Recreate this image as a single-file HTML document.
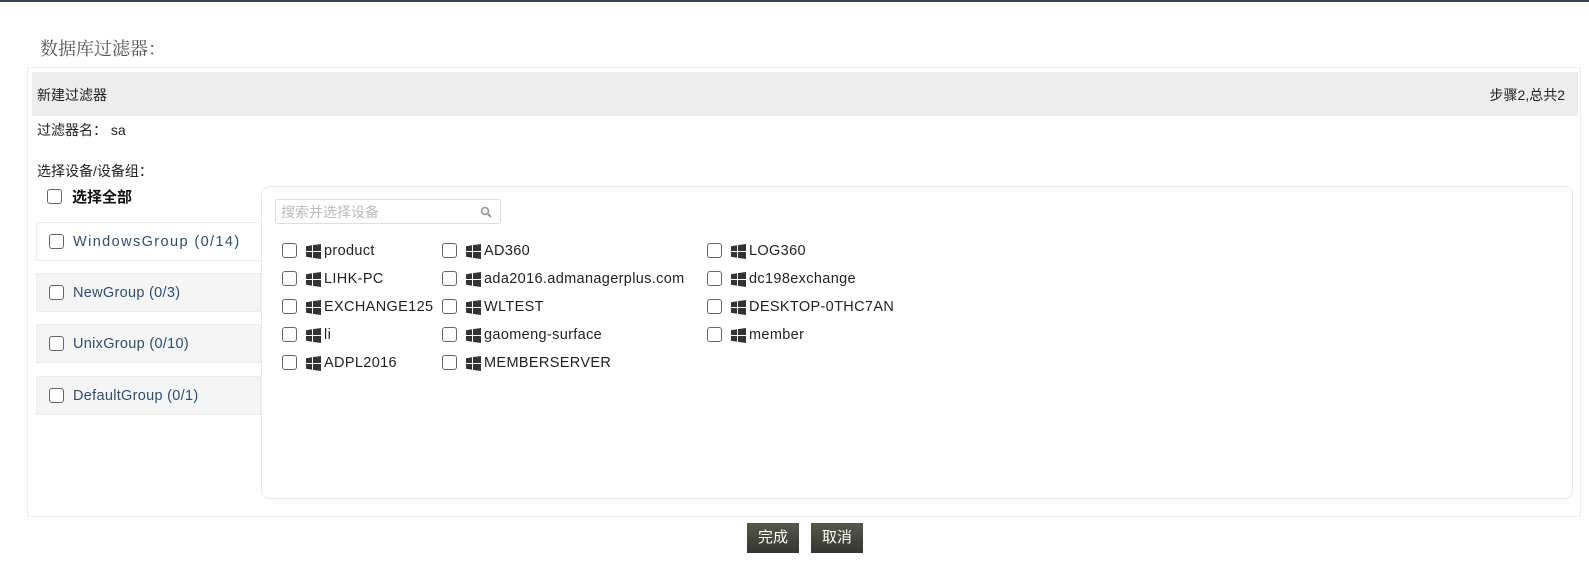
<!DOCTYPE html>
<html><head><meta charset="utf-8"><style>
*{margin:0;padding:0;box-sizing:border-box}
body{width:1589px;height:565px;background:#fff;position:relative;overflow:hidden;font-family:"Liberation Sans","Noto Sans CJK SC",sans-serif;font-size:14px;color:#222}
.a{position:absolute}
.cb{position:absolute;width:15px;height:15px;border:1px solid #666;border-radius:3px;background:#fff}
.grp{position:absolute;left:36px;width:225px;height:39px;background:#f5f5f5;border:1px solid #ececec}
.grp span{position:absolute;left:36px;top:11px;color:#2f4d6f;font-size:14.5px;letter-spacing:.3px}
.grp .cb{left:12px;top:11px}
.it{position:absolute;height:18px;font-size:14.5px;color:#222;white-space:nowrap;letter-spacing:.35px}
.it .cb{left:0;top:1px}
.it svg{position:absolute;left:24px;top:2px}
.it span{position:absolute;left:42px;top:1px}
.btn{position:absolute;top:523px;width:52px;height:30px;background:linear-gradient(#55584c,#34362e);color:#fff;font-size:15px;text-align:center;line-height:30px}
</style></head><body>
<div class="a" style="left:0;top:0;width:1589px;height:2px;background:#3d4650"></div>
<div class="a" style="left:40px;top:35px;font-family:'Liberation Serif','Noto Serif CJK SC',serif;font-size:18px;color:#555">数据库过滤器：</div>
<div class="a" style="left:27px;top:67px;width:1554px;height:450px;border:1px solid #eee"></div>
<div class="a" style="left:32px;top:72px;width:1546px;height:44px;background:#ededee"></div>
<div class="a" style="left:37px;top:85px">新建过滤器</div>
<div class="a" style="right:24px;top:85px">步骤2,总共2</div>
<div class="a" style="left:37px;top:120px">过滤器名：  sa</div>
<div class="a" style="left:37px;top:161px">选择设备/设备组：</div>
<div class="cb" style="left:47px;top:189px"></div>
<div class="a" style="left:72px;top:186px;font-weight:bold;color:#111;font-size:15px">选择全部</div>
<div class="a" style="left:261px;top:186px;width:1312px;height:313px;border:1px solid #e8e8e8;border-radius:8px"></div>
<div class="grp" style="top:222px;background:#fff;border-right:none"><div class="cb"></div><span style="letter-spacing:1.4px">WindowsGroup (0/14)</span></div>
<div class="grp" style="top:273px"><div class="cb"></div><span>NewGroup (0/3)</span></div>
<div class="grp" style="top:324px"><div class="cb"></div><span>UnixGroup (0/10)</span></div>
<div class="grp" style="top:376px"><div class="cb"></div><span>DefaultGroup (0/1)</span></div>
<div class="a" style="left:275px;top:199px;width:226px;height:25px;border:1px solid #ddd;border-radius:3px"></div>
<div class="a" style="left:281px;top:202px;color:#bbb;font-size:14px">搜索并选择设备</div>
<svg class="a" style="left:480px;top:206px" width="12" height="12" viewBox="0 0 12 12"><circle cx="5" cy="5" r="3.5" fill="none" stroke="#999" stroke-width="1.6"/><path d="M7.5 7.5 11 11" stroke="#999" stroke-width="2"/></svg>
<div id="items"></div>
<div class="btn" style="left:747px">完成</div>
<div class="btn" style="left:811px">取消</div>
<script>
var cols=[[282,['product','LIHK-PC','EXCHANGE125','li','ADPL2016']],[442,['AD360','ada2016.admanagerplus.com','WLTEST','gaomeng-surface','MEMBERSERVER']],[707,['LOG360','dc198exchange','DESKTOP-0THC7AN','member']]];
var ic='<svg width="15" height="15" viewBox="0 0 15 15"><path d="M0 2.2 6 1.3V7H0zM7 1.1 15 0v7H7zM0 8h6v5.7l-6-.9zM7 8h8v7l-8-1.1z" fill="#333"/></svg>';
var h='';cols.forEach(function(c){c[1].forEach(function(t,i){h+='<div class="it" style="left:'+c[0]+'px;top:'+(242+i*28)+'px"><div class="cb"></div>'+ic+'<span>'+t+'</span></div>';});});
document.getElementById('items').innerHTML=h;
</script>
</body></html>
